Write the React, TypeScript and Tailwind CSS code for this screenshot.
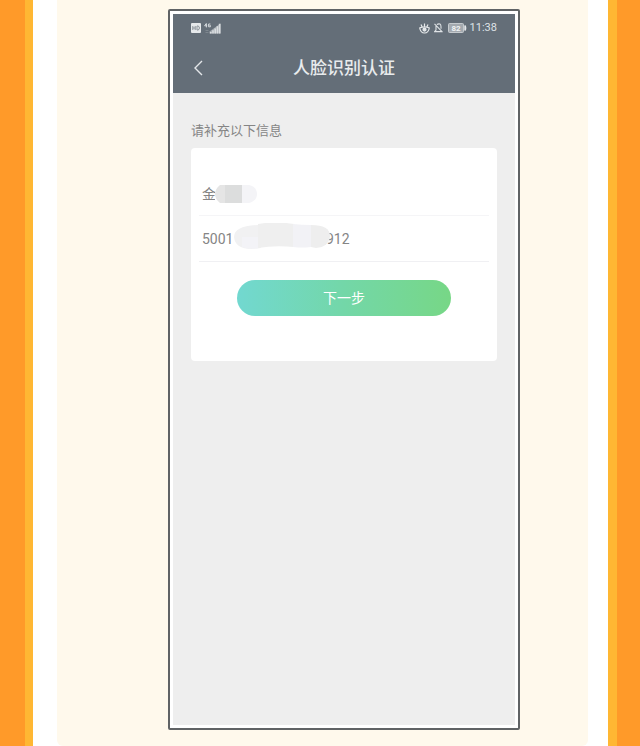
import { useState } from "react";

function StatusBar() {
  return (
    <div className="flex h-7 items-center justify-between px-[18px] text-[#dfe3e7]">
      <div className="flex items-center gap-[3px]">
        <svg width="10" height="10" viewBox="0 0 10 10" aria-hidden="true">
          <rect width="10" height="10" rx="1" fill="#e6e9eb" />
          <path d="M1.8 3v4M4.2 3v4M1.8 5h2.4M6 3v4h1q1.4-.3 1.4-2T7 3z" fill="none" stroke="#8d949b" />
        </svg>
        <svg width="17" height="11" viewBox="0 0 17 11" aria-hidden="true">
          <path d="M2.2.5.6 2.8h2.6M2.4.5v3.9M6.4 1H4.6v2.8h1.8V2.5h-.9" fill="none" stroke="#d3d8dc" />
          <path d="M1.5 7.5h3M1.5 9.5h3" stroke="#858e96" strokeWidth="0.8" />
          <path d="M5.5 10.5v-2l11-8v10z" fill="#a3aab0" />
          <path d="M6 9h1.6v1.5H6zM8.2 7.2h1.6v3.3H8.2zM10.4 5.5H12v5h-1.6zM12.6 3.3h1.6v7.2h-1.6zM14.8.8h1.7v9.7h-1.7z" fill="#d9dde0" />
        </svg>
      </div>
      <div className="flex items-center">
        <svg width="11" height="11" viewBox="0 0 11 11" fill="none" stroke="#e6e9eb" strokeWidth="1.2" aria-hidden="true">
          <path d="M.6 4.5Q1.5 10 5.5 10t4.9-5.5M.6 5Q5.5 2.6 10.4 5M5.5.5V4M2 1.5 3.2 4M9 1.5 7.8 4" />
          <circle cx="5.5" cy="6.6" r="1.5" fill="#e6e9eb" />
        </svg>
        <svg className="ml-1" width="9" height="10" viewBox="0 0 9 10" fill="none" stroke="#dfe3e6" strokeWidth="1.1" aria-hidden="true">
          <path d="M2.8 1.4Q7-.4 7 3.7v2M2 3v4L.7 8.6h7M.5.8l8 8.4" />
        </svg>
        <svg className="ml-[5px]" width="19" height="10" viewBox="0 0 19 10" aria-hidden="true">
          <rect x="0.5" y="0.5" width="15" height="9" rx="1" fill="#a3a9af" stroke="#c5cace" />
          <path d="M17 2.5q1.2 2.5 0 5z" fill="#e3e6e9" stroke="#e3e6e9" strokeWidth="1.5" />
          <text x="8" y="8" textAnchor="middle" fontSize="8" fontWeight="700" fill="#f1f3f4" fontFamily="Roboto, sans-serif">82</text>
        </svg>
        <span className="ml-[3px] text-[11px] leading-4">11:38</span>
      </div>
    </div>
  );
}

function NameMask() {
  return (
    <svg className="relative shrink-0" width="42" height="18" viewBox="0 0 42 18" aria-hidden="true">
      <path d="M5 0h6v18H5Q0 14 0 9T5 0z" fill="#e5e5e5" />
      <path d="M10 0h17v18H10z" fill="#dcdddd" />
      <path d="M27 0h7q8 2 8 9t-8 9h-7z" fill="#f4f4f7" />
    </svg>
  );
}

function NumberMask() {
  return (
    <svg className="relative shrink-0" width="96" height="32" viewBox="0 0 96 32" aria-hidden="true">
      <path d="M24 2Q0 3 0 14q1 12 18 12l9-1V1z" fill="#f1f1f2" />
      <path d="M8 14h17v11q-9 2-17-1z" fill="#f3f3f7" />
      <path d="M24 1q17-3 36 0v23q-19-2-36 1z" fill="#efefef" />
      <path d="M59 1q9 1 18 1v22q-9 1-18 0z" fill="#f2f2f6" />
      <path d="M77 2q19 0 19 11-1 11-14 12l-5-1z" fill="#eeeeee" />
    </svg>
  );
}

export default function App() {
  const [name, setName] = useState("金");
  const [head, setHead] = useState("5001");
  const [tail, setTail] = useState("912");

  return (
    <div className="flex min-h-screen bg-white font-[Roboto,'Noto_Sans_CJK_SC',sans-serif]">
      <div className="w-[25px] shrink-0 bg-[#ff9a29]" />
      <div className="w-2 shrink-0 bg-[#ffb733]" />
      <main className="mr-5 ml-6 flex min-w-0 flex-1 flex-col rounded-b-md bg-[#fff9ec] pt-[9px] pr-[68px] pb-4 pl-[111px]">
        <div className="flex flex-1 flex-col rounded-xs border-2 border-[#606365] bg-white p-[3px]">
          <section className="flex flex-1 flex-col bg-[#eeeeee]">
            <header className="bg-[#646e78]">
              <StatusBar />
              <div className="grid h-[51px] grid-cols-[52px_1fr_52px] items-center">
                <button type="button" aria-label="返回" className="flex h-full items-center pl-5">
                  <svg width="11" height="16" viewBox="0 0 11 16" fill="none" stroke="#e4e7ea" strokeWidth="1.4" aria-hidden="true">
                    <path d="M9 1 2 8l7 7" />
                  </svg>
                </button>
                <h1 className="text-center text-[17px] leading-6 font-medium text-[#e8ebed]">人脸识别认证</h1>
              </div>
            </header>

            <form className="px-[18px] pt-7" onSubmit={(e) => e.preventDefault()}>
              <p className="text-[13px] leading-5 text-[#858585]">请补充以下信息</p>
              <div className="mt-[7px] rounded bg-white px-2 pt-6 pb-[45px]">
                <div className="flex h-11 items-center border-b border-[#f5f5f7] px-[3px]">
                  <input
                    aria-label="姓名"
                    className="w-[13px] text-[14px] leading-5 text-[#858585] outline-none"
                    value={name}
                    onChange={(e) => setName(e.target.value)}
                  />
                  <NameMask />
                </div>
                <div className="flex h-[46px] items-center border-b border-[#f0f0f3] px-[3px]">
                  <input
                    aria-label="身份证号前四位"
                    className="w-8 text-[14px] leading-5 text-[#858585] outline-none"
                    value={head}
                    onChange={(e) => setHead(e.target.value)}
                  />
                  <NumberMask />
                  <input
                    aria-label="身份证号后三位"
                    className="-ml-1 w-7 text-[14px] leading-5 text-[#858585] outline-none"
                    value={tail}
                    onChange={(e) => setTail(e.target.value)}
                  />
                </div>
                <div className="px-[38px] pt-[18px]">
                  <button
                    type="submit"
                    className="h-9 w-full rounded-full bg-linear-to-r from-[#72d8d0] via-[#73d7a8] to-[#77d786] text-[14px] leading-5 text-white"
                  >
                    下一步
                  </button>
                </div>
              </div>
            </form>
          </section>
        </div>
      </main>
      <div className="w-[9px] shrink-0 bg-[#ffb733]" />
      <div className="w-[23px] shrink-0 bg-[#ff9a29]" />
    </div>
  );
}
